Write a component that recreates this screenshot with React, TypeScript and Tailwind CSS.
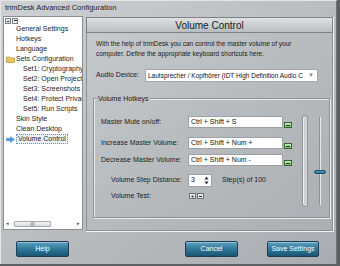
import React from "react";

const font = "font-['Liberation_Sans',Arial,sans-serif]";

function GreenBtn() {
  return (
    <div className="w-[8px] h-[6px] ml-[1px] border border-[#35622f] bg-gradient-to-b from-[#c9efc0] to-[#7cc46e] flex items-center justify-center">
      <div className="w-[4px] h-[1px] bg-[#1d3a1a]" />
    </div>
  );
}

function TealBtn({ label, w }: { label: string; w: string }) {
  return (
    <div
      className={`${w} h-[16px] rounded-[2px] border border-[#1d3d50] bg-gradient-to-b from-[#5ea2c2] via-[#2f7799] to-[#1b5674] flex items-center justify-center text-white text-[7px] shadow-[inset_0_1px_0_rgba(255,255,255,0.35)]`}
    >
      {label}
    </div>
  );
}

function HotkeyRow({ label, value, mt }: { label: string; value: string; mt: string }) {
  return (
    <div className={`flex items-end ${mt}`}>
      <div className="w-[87px] h-[12px] flex items-center text-[7px] text-[#1c1c1c]">{label}</div>
      <div className="w-[95px] h-[12px] bg-white border border-[#9da1a5] flex items-center pl-[2px] text-[7px] text-[#111]">
        {value}
      </div>
      <GreenBtn />
    </div>
  );
}

const treeItems: { label: string; indent: string; icon?: "folder" | "arrow"; selected?: boolean }[] = [
  { label: "General Settings", indent: "pl-[12px]" },
  { label: "Hotkeys", indent: "pl-[12px]" },
  { label: "Language", indent: "pl-[12px]" },
  { label: "Sets Configuration", indent: "pl-[2px]", icon: "folder" },
  { label: "Set1: Cryptography", indent: "pl-[19px]" },
  { label: "Set2: Open Project D", indent: "pl-[19px]" },
  { label: "Set3: Screenshots", indent: "pl-[19px]" },
  { label: "Set4: Protect Privac", indent: "pl-[19px]" },
  { label: "Set5: Run Scripts", indent: "pl-[19px]" },
  { label: "Skin Style", indent: "pl-[12px]" },
  { label: "Clean Desktop", indent: "pl-[12px]" },
  { label: "Volume Control", indent: "pl-[2px]", icon: "arrow", selected: true },
];

export default function App() {
  return (
    <div className={`w-[340px] h-[266px] bg-[#5d6164] ${font}`}>
      <div className="w-[337px] h-[264px] flex flex-col bg-gradient-to-br from-[#ced1d4] via-[#b9bdc0] to-[#a9adb1] border-l border-t border-[#e4e6e8] border-r border-r-[#6f7377]">
        {/* title bar */}
        <div className="h-[14px] flex items-center pl-[4px] text-[7.5px] text-[#222]">trimDesk Advanced Configuration</div>

        <div className="flex h-[217px]">
          {/* tree */}
          <div className="ml-[2px] mt-[1px] w-[80px] h-[214px] bg-white border border-[#8a8e92] flex flex-col overflow-hidden">
            <div className="h-[7px] flex items-center gap-[1px] pl-[1px]">
              <div className="w-[6px] h-[6px] border border-[#7d8185] bg-[#eef0f2] flex items-center justify-center text-[6px] leading-none text-[#222]">+</div>
              <div className="w-[6px] h-[6px] border border-[#7d8185] bg-[#eef0f2] flex items-center justify-center">
                <div className="w-[3px] h-[1px] bg-[#222]" />
              </div>
            </div>
            {treeItems.map((it) => (
              <div key={it.label} className={`h-[10px] flex items-center whitespace-nowrap text-[7px] text-[#1e1e1e] ${it.indent}`}>
                {it.icon === "folder" && (
                  <svg width="9" height="7" viewBox="0 0 9 7" className="mr-[1px]">
                    <path d="M0.5 1 H3.5 L4.3 2 H8.5 V6.5 H0.5 Z" fill="#e8c65a" stroke="#a8842a" strokeWidth="0.6" />
                  </svg>
                )}
                {it.icon === "arrow" && (
                  <svg width="9" height="7" viewBox="0 0 9 7" className="mr-[1px]">
                    <path d="M0.5 2.3 H4.5 V0.5 L8.5 3.5 L4.5 6.5 V4.7 H0.5 Z" fill="#4d9be0" stroke="#2a6fb0" strokeWidth="0.4" />
                  </svg>
                )}
                <span className={it.selected ? "border border-dotted border-[#6a8fbf] bg-[#eaf2fb] px-[1px] leading-[8px]" : ""}>{it.label}</span>
              </div>
            ))}
            <div className="flex-1" />
            <div className="h-[8px] mb-[1px] flex items-center px-[2px] text-[5px] text-[#444]">
              <span className="w-[6px]">◂</span>
              <div className="ml-[2px] w-[37px] h-[6px] rounded-[1px] border border-[#a6abb0] bg-gradient-to-b from-[#f4f5f6] to-[#d7dadd] flex items-center justify-center text-[5px] leading-none text-[#555]">III</div>
              <div className="flex-1" />
              <span>▸</span>
            </div>
          </div>

          {/* right panel */}
          <div className="ml-[3px] mt-[2px] w-[248px] h-[215px] border-r border-b border-[#f0f2f3] flex flex-col">
            <div className="h-[214px] border border-[#8c9094] flex flex-col">
              <div className="h-[16px] -mx-px -mt-px border border-[#7f8387] bg-gradient-to-b from-[#dfe1e3] to-[#b9bdc1] flex items-center justify-center text-[10px] text-[#1a1a1a]">
                Volume Control
              </div>
              <div className="mt-[6px] pl-[9px] text-[6.5px] leading-[10px] text-[#1a1a1a]">
                <div>With the help of trimDesk you can control the master volume of your</div>
                <div>computer. Define the appropriate keyboard shortcuts here.</div>
              </div>
              <div className="mt-[10px] pl-[9px] flex items-center">
                <div className="w-[49px] text-[7px] text-[#1a1a1a]">Audio Device:</div>
                <div className="w-[173px] h-[13px] bg-white border border-[#a4a8ac] flex items-center pl-[2px] pr-[3px] text-[6.5px] text-[#111] whitespace-nowrap overflow-hidden">
                  <span className="flex-1 overflow-hidden">Lautsprecher / Kopfhörer (IDT High Definition Audio C</span>
                  <span className="text-[6px] text-[#8a8e92]">▼</span>
                </div>
              </div>

              {/* group box */}
              <div className="relative mt-[16px] ml-[6px] w-[237px] h-[120px] border border-[#8e9296] shadow-[1px_1px_0_#e8eaec,inset_1px_1px_0_#e8eaec]">
                <div className="absolute -top-[5px] left-[3px] px-[1px] text-[7px] leading-[9px] text-[#1a1a1a] bg-[#bfc2c5]">Volume Hotkeys</div>
                <div className="flex pl-[7px]">
                  <div className="flex flex-col w-[192px]">
                    <HotkeyRow label="Master Mute on/off:" value="Ctrl + Shift + S" mt="mt-[17px]" />
                    <HotkeyRow label="Increase Master Volume:" value="Ctrl + Shift + Num +" mt="mt-[9px]" />
                    <HotkeyRow label="Decrease Master Volume:" value="Ctrl + Shift + Num -" mt="mt-[5px]" />
                    <div className="flex items-center mt-[8px]">
                      <div className="w-[87px] pl-[10px] text-[7px] text-[#1c1c1c]">Volume Step Distance:</div>
                      <div className="w-[24px] h-[13px] bg-white border border-[#9da1a5] flex items-center pl-[2px] pr-[2px] text-[7px] text-[#111]">
                        <span className="flex-1">3</span>
                        <svg width="5" height="9" viewBox="0 0 5 9">
                          <path d="M2.5 0.5 L4.5 3.5 H0.5 Z" fill="#333" />
                          <path d="M2.5 8.5 L4.5 5.5 H0.5 Z" fill="#333" />
                        </svg>
                      </div>
                      <div className="ml-[10px] text-[7px] text-[#1c1c1c]">Step(s) of 100</div>
                    </div>
                    <div className="flex items-center mt-[4px] h-[10px]">
                      <div className="w-[87px] pl-[10px] text-[7px] text-[#1c1c1c]">Volume Test:</div>
                      <div className="flex gap-[1px] ml-[1px]">
                        <div className="w-[7px] h-[6px] border border-[#6d7175] bg-[#e9ebed] flex items-center justify-center text-[6px] leading-none font-bold text-[#222]">+</div>
                        <div className="w-[7px] h-[6px] border border-[#6d7175] bg-[#e9ebed] flex items-center justify-center">
                          <div className="w-[3px] h-[1px] bg-[#222]" />
                        </div>
                      </div>
                    </div>
                  </div>
                  {/* slider */}
                  <div className="ml-[9px] mt-[16px] w-[6px] h-[92px] rounded-[3px] border border-[#8f9397] bg-gradient-to-r from-[#c4c7ca] to-[#d8dbdd] shadow-[inset_1px_0_0_#eef0f1]" />
                  <div className="ml-[6px] mt-[18px] w-[12px] h-[88px] flex justify-center relative">
                    <div className="w-[2px] h-full bg-[#8d9195] border-r border-[#e6e8ea]" />
                    <div className="absolute left-0 top-[53px] w-[12px] h-[4px] rounded-[2px] bg-gradient-to-b from-[#6fb3d3] to-[#1f6788] border border-[#1c4d66]" />
                  </div>
                </div>
              </div>
            </div>
          </div>
        </div>

        {/* bottom buttons */}
        <div className="mt-[9px] flex items-start pl-[15px]">
          <TealBtn label="Help" w="w-[53px]" />
          <div className="ml-[116px]">
            <TealBtn label="Cancel" w="w-[53px]" />
          </div>
          <div className="ml-[29px]">
            <TealBtn label="Save Settings" w="w-[52px]" />
          </div>
        </div>
      </div>
    </div>
  );
}
